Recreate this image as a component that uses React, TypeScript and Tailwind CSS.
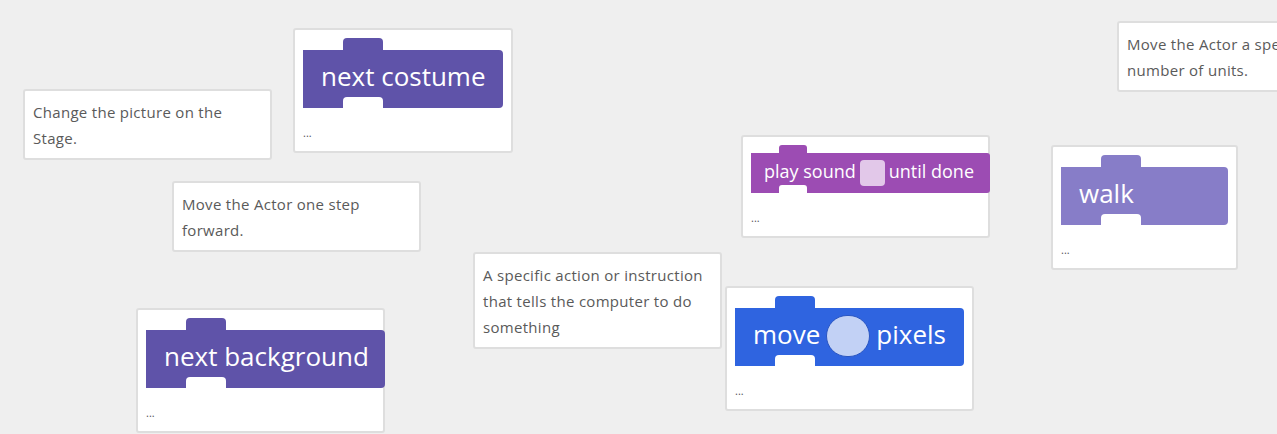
import React from "react";

type Part = { kind: "text"; value: string } | { kind: "oval" } | { kind: "square" };

type BlockCard = {
  pos: string;
  size: "lg" | "sm";
  bg: string;
  blockW: string;
  parts: Part[];
};

const descriptions = [
  { pos: "left-[23px] top-[89px] w-[249px] h-[71px]", text: "Change the picture on the Stage." },
  { pos: "left-[172px] top-[181px] w-[249px] h-[71px]", text: "Move the Actor one step forward." },
  {
    pos: "left-[473px] top-[252px] w-[249px] h-[97px]",
    text: "A specific action or instruction that tells the computer to do something",
  },
  { pos: "left-[1117px] top-[21px] w-[249px] h-[71px]", text: "Move the Actor a specific number of units." },
];

const blocks: BlockCard[] = [
  {
    pos: "left-[293px] top-[28px] w-[220px] h-[125px]",
    size: "lg",
    bg: "bg-[#5f53a9]",
    blockW: "w-[200px]",
    parts: [{ kind: "text", value: "next costume" }],
  },
  {
    pos: "left-[741px] top-[135px] w-[249px] h-[103px]",
    size: "sm",
    bg: "bg-[#9c4cb3]",
    blockW: "w-[239px]",
    parts: [{ kind: "text", value: "play sound" }, { kind: "square" }, { kind: "text", value: "until done" }],
  },
  {
    pos: "left-[1051px] top-[145px] w-[187px] h-[125px]",
    size: "lg",
    bg: "bg-[#877dc8]",
    blockW: "w-[167px]",
    parts: [{ kind: "text", value: "walk" }],
  },
  {
    pos: "left-[725px] top-[286px] w-[249px] h-[125px]",
    size: "lg",
    bg: "bg-[#2f64e0]",
    blockW: "w-[229px]",
    parts: [{ kind: "text", value: "move" }, { kind: "oval" }, { kind: "text", value: "pixels" }],
  },
  {
    pos: "left-[136px] top-[308px] w-[249px] h-[125px]",
    size: "lg",
    bg: "bg-[#5f53a9]",
    blockW: "w-[239px]",
    parts: [{ kind: "text", value: "next background" }],
  },
];

const Block = ({ card }: { card: BlockCard }) => {
  const lg = card.size === "lg";
  return (
    <div className={`relative shrink-0 ${card.blockW} ${lg ? "pt-[12px]" : "pt-[8px]"}`}>
      {/* top tab */}
      <div
        className={`absolute top-0 ${card.bg} ${
          lg ? "left-[40px] w-[40px] h-[13px] rounded-t-[4px]" : "left-[28px] w-[28px] h-[9px] rounded-t-[3px]"
        }`}
      />
      <div
        className={`relative flex items-center text-white font-['Open_Sans','Noto_Sans',sans-serif] ${card.bg} ${
          lg
            ? "gap-[6px] h-[58px] pl-[18px] pb-[6px] rounded-r-[4px] text-[26px]"
            : "gap-[4px] h-[40px] pl-[13px] pb-[4px] rounded-r-[3px] text-[18px]"
        }`}
      >
        {card.parts.map((p, i) => {
          if (p.kind === "text")
            return (
              <span key={i} className="whitespace-nowrap leading-none">
                {p.value}
              </span>
            );
          if (p.kind === "oval")
            return (
              <span key={i} className="w-[44px] h-[42px] mt-[4px] rounded-full bg-[#c2d1f5] border border-[#2a56c2] shrink-0" />
            );
          return <span key={i} className="w-[25px] h-[26px] mt-[3px] rounded-[4px] bg-[#e2c8e9] shrink-0" />;
        })}
        {/* bottom notch */}
        <div
          className={`absolute bottom-0 bg-white ${
            lg ? "left-[40px] w-[40px] h-[11px] rounded-t-[4px]" : "left-[28px] w-[28px] h-[8px] rounded-t-[3px]"
          }`}
        />
      </div>
    </div>
  );
};

const App = () => {
  return (
    <div className="relative w-full h-[434px] overflow-hidden bg-[#efefef] font-['Open_Sans','Noto_Sans',sans-serif]">
      {descriptions.map((d, i) => (
        <div
          key={i}
          className={`absolute ${d.pos} bg-white border-2 border-[#dedede] rounded-[3px] px-[8px] pt-[8px] text-[15px] leading-[26px] text-[#5a5a5a] tracking-[0.3px]`}
        >
          {d.text}
        </div>
      ))}
      {blocks.map((b, i) => (
        <div
          key={i}
          className={`absolute ${b.pos} flex flex-col bg-white border-2 border-[#dedede] rounded-[3px] px-[8px] pt-[8px]`}
        >
          <Block card={b} />
          <div className="mt-[19px] text-[11px] leading-none text-[#555]">...</div>
        </div>
      ))}
    </div>
  );
};

export default App;
